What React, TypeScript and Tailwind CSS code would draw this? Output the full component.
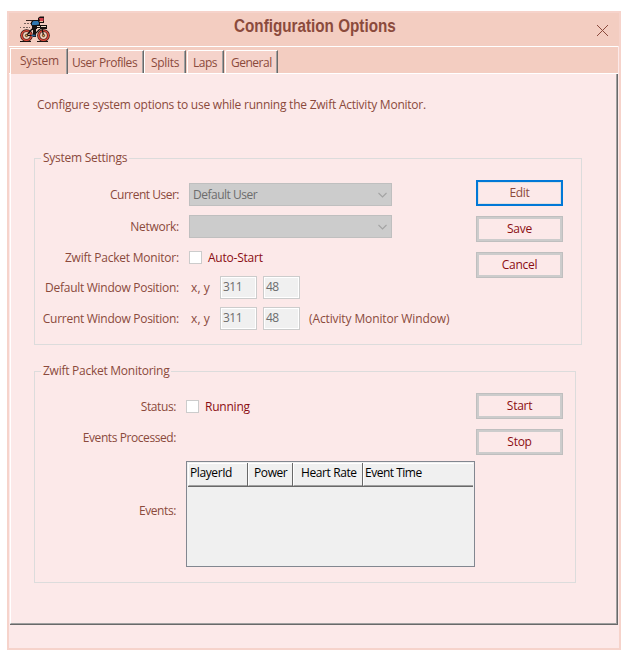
import type { ReactNode } from "react";

function Wheel({ cx }: { cx: number }) {
  return (
    <g>
      <circle cx={cx} cy="19.5" r="6.3" fill="#2a1512" />
      <circle cx={cx} cy="19.5" r="5.6" fill="#dd4a3a" />
      <circle cx={cx} cy="19.5" r="4" fill="#2a1512" />
      <circle cx={cx} cy="19.5" r="3.4" fill="#f0cdb8" />
    </g>
  );
}

function BikeLogo() {
  return (
    <svg width="32" height="28" viewBox="0 0 32 28" fill="none">
      <path d="M5 7.500h2M8 7.500h2M11 7.500h1M1 11.500h1M4 11.500h2M7 11.500h2M10 11.500h1" stroke="#77645f" />
      <path d="M7 4.500h7" stroke="#33231f" />
      <path d="M1 25.500h11M18 25.500h11" stroke="#17110f" />
      <Wheel cx={7.5} />
      <Wheel cx={24.5} />
      <path d="M7.500 19.500h7l7-7M13 13l-5 6M23 12.500l1.500 7" stroke="#17110f" strokeWidth="1.2" />
      <circle cx="7.500" cy="19.500" r="1.200" fill="#f0a040" stroke="#17110f" strokeWidth=".7" />
      <circle cx="24.500" cy="19.500" r="1.200" fill="#f0a040" stroke="#17110f" strokeWidth=".7" />
      <path d="M13 9h4v12h-3v-7h-1z" fill="#17110f" />
      <path d="M12.500 19.500h4" stroke="#28659a" strokeWidth="1.6" />
      <path d="M14 9h14v4H16z" fill="#17110f" />
      <path d="M18 10.500h3M22 10.500h5M18 12.500h3" stroke="#f2dcc9" />
      <path d="M12 9V6l2-2h7v5l-3 1h-5z" fill="#17110f" />
      <path d="M13 6.500L14.500 5H20v3.500L17 9h-4z" fill="#2f78b2" />
      <path d="M19 2l2-1.500h4V7h-5l-1-2z" fill="#17110f" />
      <path d="M20 2h4.500v3H21z" fill="#d0414d" />
      <path d="M20.500 5.500h3.500" stroke="#edbc9e" />
    </svg>
  );
}

function Group({ title, className, children }: { title: string; className: string; children: ReactNode }) {
  return (
    <section className={`ml-[23px] border border-[#dcdcdc] ${className}`}>
      <h2 className="-mt-[9px] ml-1.5 h-4 w-fit bg-[#fce9e9] pl-0.5 pr-[2px] leading-4 tracking-[-0.26px]">{title}</h2>
      {children}
    </section>
  );
}

function Label({ children, className = "w-36" }: { children: ReactNode; className?: string }) {
  return <span className={`shrink-0 text-right ${className}`}>{children}</span>;
}

function Combo({ value = "" }: { value?: string }) {
  return (
    <div className="ml-2.5 flex h-[23px] w-[203px] items-center justify-between border border-[#bfbfbf] bg-[#ccc] pl-[3px] pr-1 tracking-[-0.5px] text-[#6d6d6d]">
      <span className="pt-px">{value}</span>
      <svg width="9" height="6" viewBox="0 0 9 6" fill="none">
        <path d="M.5 1l4 4 4-4" stroke="#a3a3a3" strokeWidth="1.1" />
      </svg>
    </div>
  );
}

function Check({ children }: { children: ReactNode }) {
  return (
    <div className="ml-2.5 flex items-center text-[#8b0d12]">
      <span className="size-[13px] border border-[#ccc] bg-white" />
      <span className="ml-1.5 tracking-[-0.22px]">{children}</span>
    </div>
  );
}

function NumBox({ value }: { value: string }) {
  return (
    <span className="mr-1.5 h-[23px] w-[37px] border border-[#ccc] bg-white p-px">
      <span className="block h-[19px] bg-[#f0f0f0] pl-px leading-[18px] tracking-[-0.5px] text-[#6d6d6d]">{value}</span>
    </span>
  );
}

function Position({ label, note, className }: { label: string; note?: string; className: string }) {
  return (
    <div className={`flex h-[23px] items-center ${className}`}>
      <Label>{label}</Label>
      <span className="ml-3 w-[29px] tracking-[0.1px]">x, y</span>
      <NumBox value="311" />
      <NumBox value="48" />
      <span className="ml-[3px] whitespace-nowrap tracking-[-0.12px]">{note}</span>
    </div>
  );
}

function Button({ children, focused = false }: { children: ReactNode; focused?: boolean }) {
  return focused ? (
    <button className="h-[26px] w-[87px] border-2 border-[#0078d7]">
      <span className="flex h-[22px] items-center justify-center border border-[#dfdfdf] pb-px">{children}</span>
    </button>
  ) : (
    <button className="h-[26px] w-[87px] border border-[#bfbfbf] text-[#8b0d12]">
      <span className="flex h-6 items-center justify-center border-2 border-[#ccc] pb-px">{children}</span>
    </button>
  );
}

function Tab({ children, className }: { children: ReactNode; className: string }) {
  return (
    <div className={`mt-[3px] h-[23px] rounded-tl-xs border-t border-r border-t-white border-r-[#696969] bg-[#f5d3cb] ${className}`}>
      <div className="h-full whitespace-nowrap border-r border-[#a0a0a0] leading-[23px]">{children}</div>
    </div>
  );
}

function Column({ children, className = "" }: { children: ReactNode; className?: string }) {
  return (
    <div className={`h-6 border-[#696969] border-b ${className}`}>
      <div className="h-[23px] border-t border-b border-l border-t-white border-b-[#a0a0a0] border-l-white leading-[17px]">{children}</div>
    </div>
  );
}

export default function App() {
  return (
    <div className="h-[657px] w-[628px] overflow-hidden bg-white pt-[11px] pl-[7px] font-['Open_Sans','Noto_Sans',sans-serif] text-[12px] leading-4 tracking-[-0.28px] text-[#8b4a3c]">
      <main className="h-[639px] w-[614px] border-2 border-[#f6d3cb] bg-[#fce9e9]">
        <header className="flex h-[33px] bg-[#f3cdc1]">
          <div className="ml-2.5 w-8 pt-[3px]"><BikeLogo /></div>
          <h1 className="ml-[183px] w-[162px] origin-left scale-x-[0.824] whitespace-nowrap font-['Liberation_Sans',sans-serif] text-[18.5px] font-bold leading-[26px] tracking-[0px]">Configuration Options</h1>
          <svg className="mt-[11px] ml-[200px]" width="13" height="13" viewBox="0 0 13 13">
            <path d="M1 1l11 11M12 1L1 12" stroke="#8b4a3c" />
          </svg>
        </header>
        <nav className="mr-px flex h-7 border-t border-b border-white bg-[#f3cdc1] pl-px">
          <div className="mt-px h-[26px] w-[58px] shrink-0 border-t border-r border-l border-t-white border-r-[#696969] border-l-white bg-[#f3cdc1]">
            <div className="h-full border-r border-[#a0a0a0] pl-[9px] leading-[23px]">System</div>
          </div>
          <Tab className="w-[76px] pl-1 tracking-[-0.46px]">User Profiles</Tab>
          <Tab className="w-[42px] border-l border-l-white pl-[6px]">Splits</Tab>
          <Tab className="ml-px w-[37px] border-l border-l-white pl-[5px] tracking-[-0.5px]">Laps</Tab>
          <Tab className="ml-px w-[53px] border-l border-l-white pl-[5px] tracking-[-0.5px]">General</Tab>
        </nav>
        <div className="ml-px h-[551px] w-[608px] border-r border-b border-[#696969]">
          <div className="h-[550px] border-r border-b border-l border-r-[#a0a0a0] border-b-[#a0a0a0] border-l-white pt-[23px]">
            <p className="ml-[26px] whitespace-nowrap tracking-[-0.235px]">Configure system options to use while running the Zwift Activity Monitor.</p>
            <Group title="System Settings" className="mt-[45px] h-[187px] w-[548px]">
              <div className="flex pt-[14px]">
                <div className="w-[441px] pt-[3px]">
                  <div className="flex h-[23px] items-center"><Label className="w-36 tracking-[-0.5px]">Current User:</Label><Combo value="Default User" /></div>
                  <div className="mt-[9px] flex h-[23px] items-center"><Label>Network:</Label><Combo /></div>
                  <div className="mt-[13px] flex h-[13px] items-center"><Label className="w-36 tracking-[-0.22px]">Zwift Packet Monitor:</Label><Check>Auto-Start</Check></div>
                  <Position className="mt-3" label="Default Window Position:" />
                  <Position className="mt-2" label="Current Window Position:" note="(Activity Monitor Window)" />
                </div>
                <div className="flex flex-col gap-2.5">
                  <Button focused>Edit</Button>
                  <Button>Save</Button>
                  <Button>Cancel</Button>
                </div>
              </div>
            </Group>
            <Group title="Zwift Packet Monitoring" className="mt-[26px] h-[212px] w-[542px]">
              <div className="flex pt-[14px]">
                <div className="h-[68px] w-[441px]">
                  <div className="flex h-[27px] items-center"><Label className="w-[141px] tracking-[-0.4px]">Status:</Label><Check>Running</Check></div>
                  <div className="mt-2.5 flex h-4 items-center"><Label className="w-[141px] tracking-[-0.42px]">Events Processed:</Label></div>
                </div>
                <div className="flex h-[68px] flex-col gap-2.5">
                  <Button>Start</Button>
                  <Button>Stop</Button>
                </div>
              </div>
              <div className="flex">
                <Label className="w-[141px] pt-[42px] tracking-[-0.4px]">Events:</Label>
                <div className="ml-2.5 h-[106px] w-[289px] border border-[#828790] bg-[#f0f0f0] p-px tracking-[-0.4px] text-black">
                  <div className="flex">
                    <Column className="w-[60px] border-r"><span className="ml-px">PlayerId</span></Column>
                    <Column className="w-[45px] border-r"><span className="ml-[5px]">Power</span></Column>
                    <Column className="w-[70px] border-r"><span className="ml-[7px]">Heart Rate</span></Column>
                    <Column className="grow"><span className="ml-px tracking-[-0.5px]">Event Time</span></Column>
                  </div>
                </div>
              </div>
            </Group>
          </div>
        </div>
      </main>
    </div>
  );
}
